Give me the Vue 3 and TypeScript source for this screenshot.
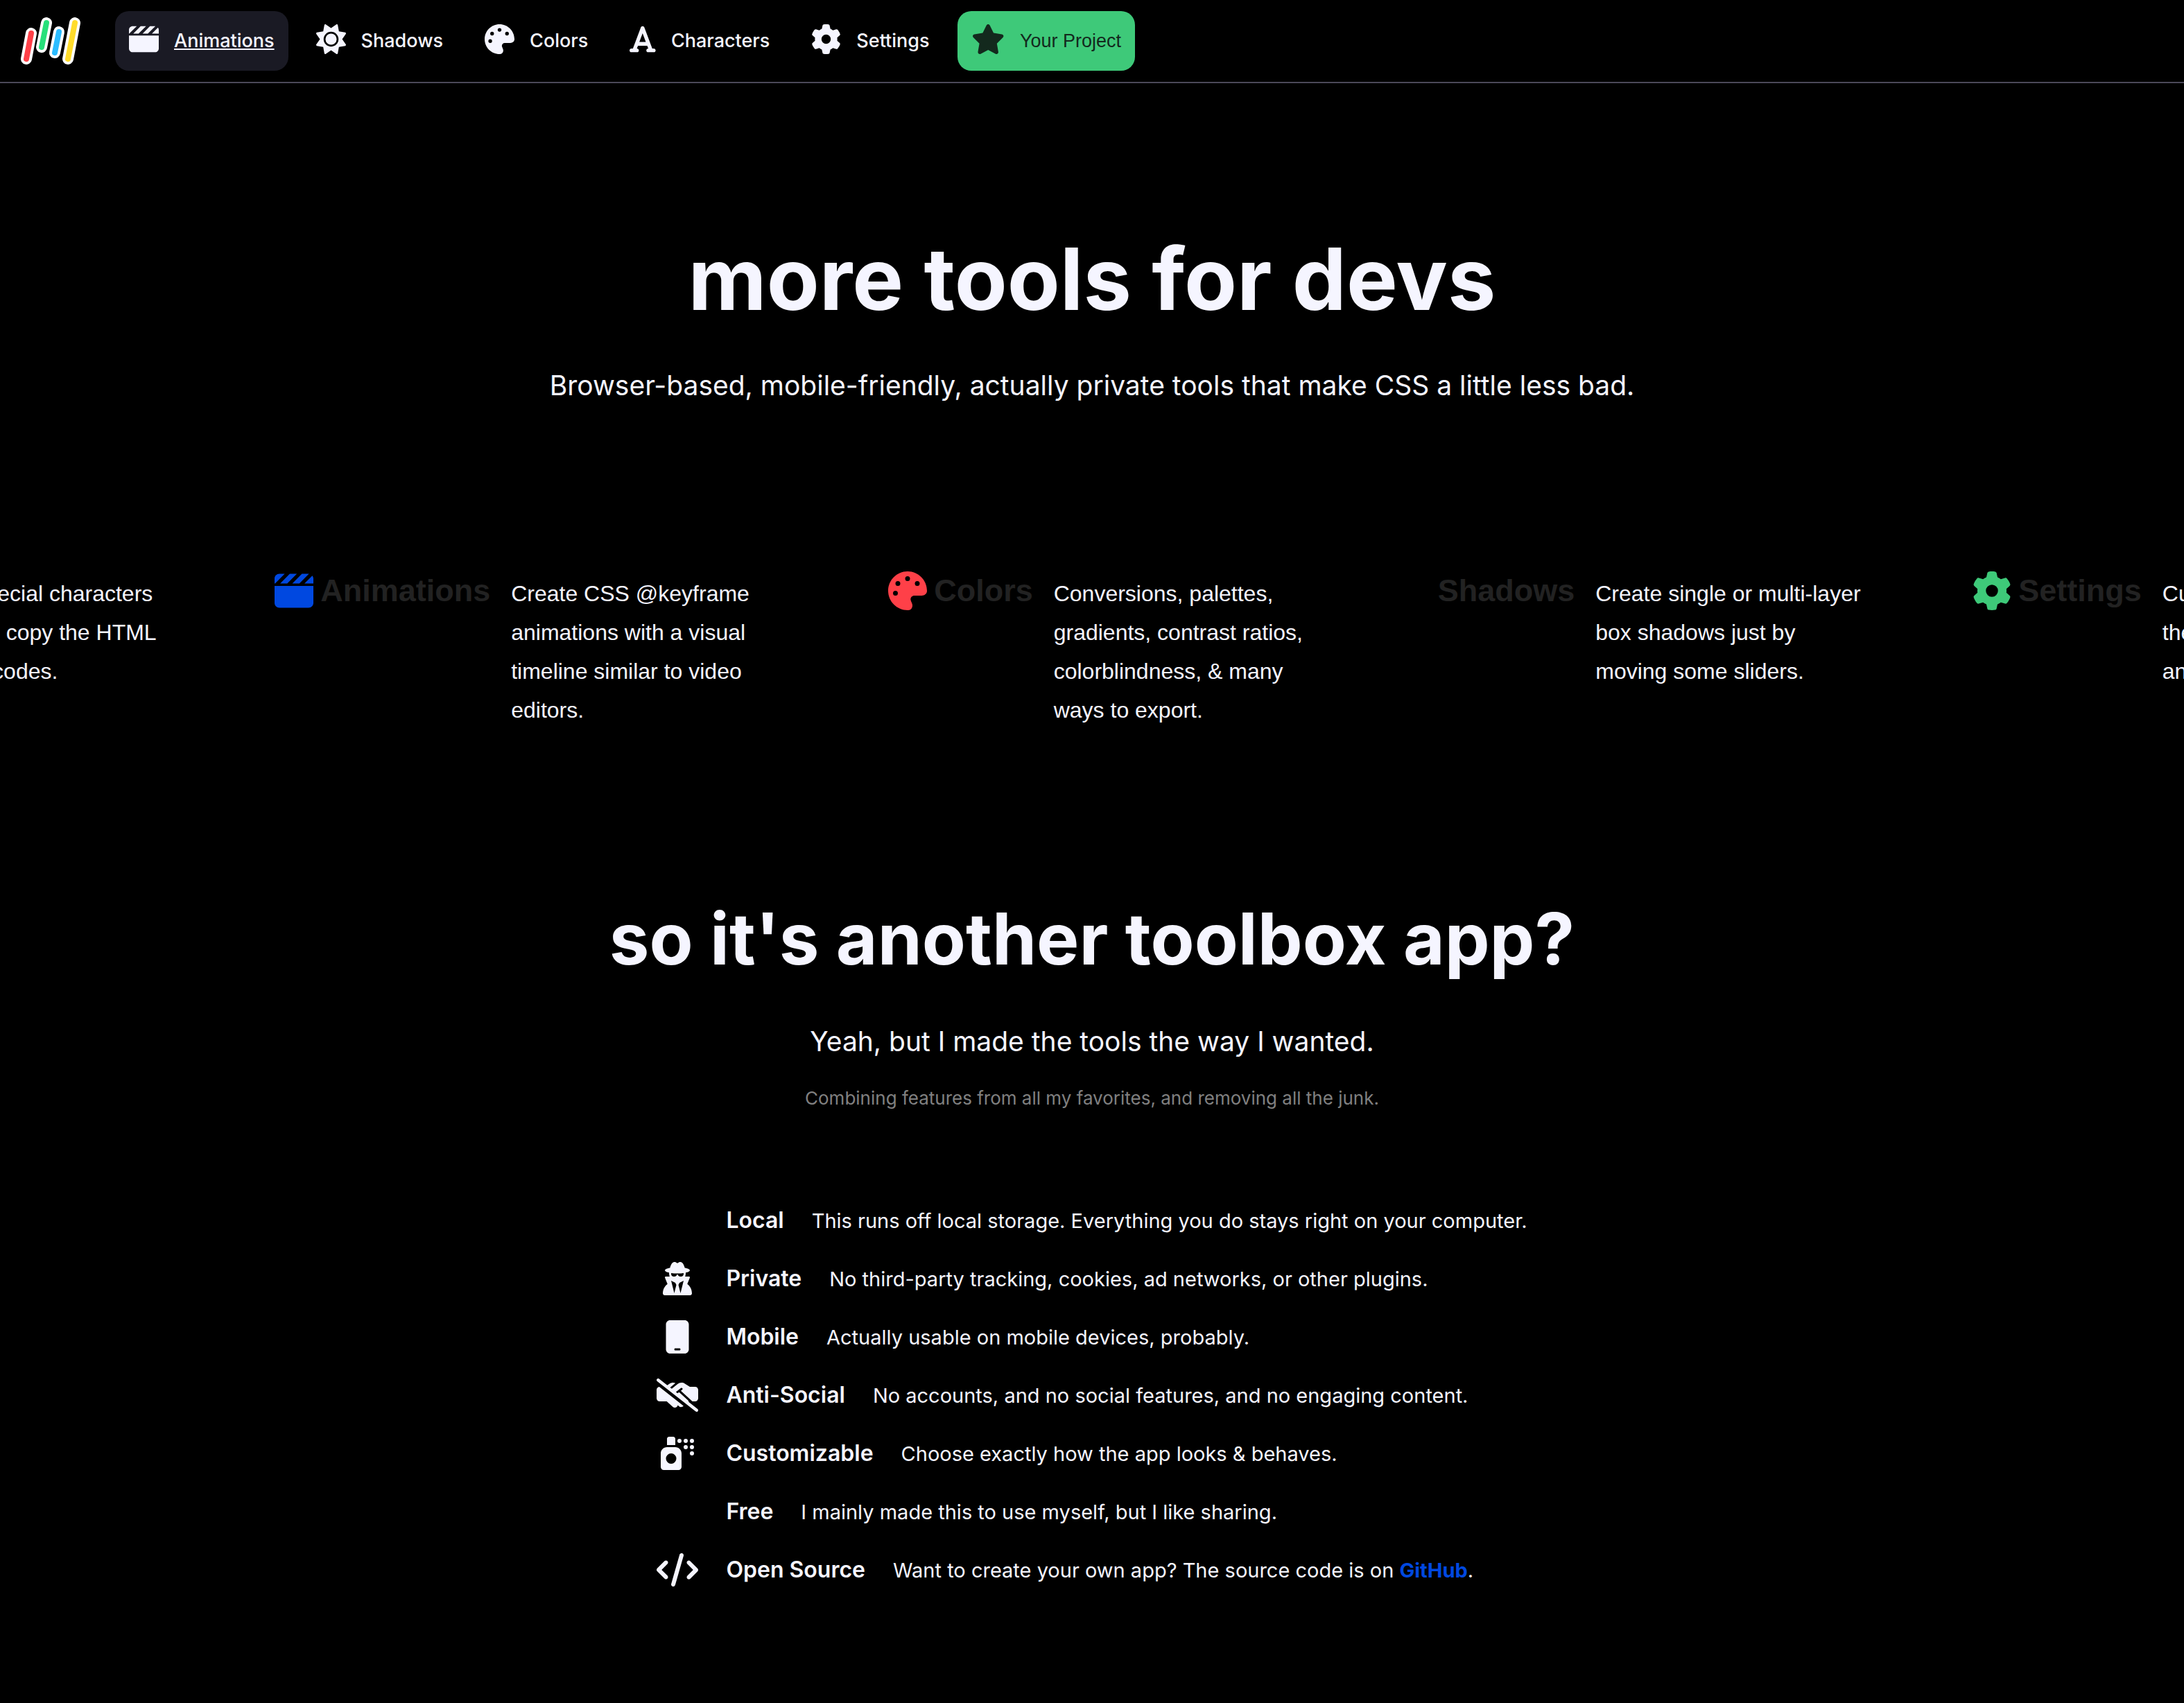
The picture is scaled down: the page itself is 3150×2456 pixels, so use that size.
<script setup lang="ts">
interface Icon {
  width: number
  paths: string[]
}

const icons: Record<string, Icon> = {
  clapperboard: {
    width: 512,
    paths: [
      'M448 32H361.9l-1 1-127 127h92.1l1-1L453.8 32.3c-1.9-.2-3.8-.3-5.8-.3zm64 128V96c0-15.1-5.3-29.1-14-40l-104 104H512zM294.1 32H201.9l-1 1L73.9 160h92.1l1-1 127-127zM64 32C28.7 32 0 60.7 0 96v64H6.1l1-1 127-127H64zM512 192H0V416c0 35.3 28.7 64 64 64H448c35.3 0 64-28.7 64-64V192z',
    ],
  },
  sun: {
    width: 512,
    paths: [
      'M361.5 1.2c5 2.1 8.6 6.6 9.6 11.9L391 121l107.9 19.8c5.3 1 9.8 4.6 11.9 9.6s1.5 10.7-1.6 15.2L446.9 256l62.3 90.3c3.1 4.5 3.7 10.2 1.6 15.2s-6.6 8.6-11.9 9.6L391 391 371.1 498.9c-1 5.3-4.6 9.8-9.6 11.9s-10.7 1.5-15.2-1.6L256 446.9l-90.3 62.3c-4.5 3.1-10.2 3.7-15.2 1.6s-8.6-6.6-9.6-11.9L121 391 13.1 371.1c-5.3-1-9.8-4.6-11.9-9.6s-1.5-10.7 1.6-15.2L65.1 256 2.8 165.7c-3.1-4.5-3.7-10.2-1.6-15.2s6.6-8.6 11.9-9.6L121 121 140.9 13.1c1-5.3 4.6-9.8 9.6-11.9s10.7-1.5 15.2 1.6L256 65.1 346.3 2.8c4.5-3.1 10.2-3.7 15.2-1.6zM160 256a96 96 0 1 1 192 0 96 96 0 1 1 -192 0zm224 0a128 128 0 1 0 -256 0 128 128 0 1 0 256 0z',
    ],
  },
  palette: {
    width: 512,
    paths: [
      'M512 256c0 .9 0 1.8 0 2.7c-.4 36.5-33.6 61.3-70.1 61.3L344 320c-26.5 0-48 21.5-48 48c0 3.4 .4 6.7 1 9.9c2.1 10.2 6.5 20 10.8 29.9c6.1 13.8 12.1 27.5 12.1 42c0 31.8-21.6 60.7-53.4 62c-3.5 .1-7 .2-10.6 .2C114.6 512 0 397.4 0 256S114.6 0 256 0S512 114.6 512 256zM128 288a32 32 0 1 0 -64 0 32 32 0 1 0 64 0zm0-96a32 32 0 1 0 0-64 32 32 0 1 0 0 64zM288 96a32 32 0 1 0 -64 0 32 32 0 1 0 64 0zm96 96a32 32 0 1 0 0-64 32 32 0 1 0 0 64z',
    ],
  },
  font: {
    width: 448,
    paths: [
      'M254 52.8C249.3 40.3 237.3 32 224 32s-25.3 8.3-30 20.8L57.8 416H32c-17.7 0-32 14.3-32 32s14.3 32 32 32h96c17.7 0 32-14.3 32-32s-14.3-32-32-32h-1.8l18-48H303.8l18 48H320c-17.7 0-32 14.3-32 32s14.3 32 32 32h96c17.7 0 32-14.3 32-32s-14.3-32-32-32H390.2L254 52.8zM279.8 304H168.2L224 155.1 279.8 304z',
    ],
  },
  gear: {
    width: 512,
    paths: [
      'M495.9 166.6c3.2 8.7 .5 18.4-6.4 24.6l-43.3 39.4c1.1 8.3 1.7 16.8 1.7 25.4s-.6 17.1-1.7 25.4l43.3 39.4c6.9 6.2 9.6 15.9 6.4 24.6c-4.4 11.9-9.7 23.3-15.8 34.3l-4.7 8.1c-6.6 11-14 21.4-22.1 31.2c-5.9 7.2-15.7 9.6-24.5 6.8l-55.7-17.7c-13.4 10.3-28.2 18.9-44 25.4l-12.5 57.1c-2 9.1-9 16.3-18.2 17.8c-13.8 2.3-28 3.5-42.5 3.5s-28.7-1.2-42.5-3.5c-9.2-1.5-16.2-8.7-18.2-17.8l-12.5-57.1c-15.8-6.5-30.6-15.1-44-25.4L83.1 425.9c-8.8 2.8-18.6 .3-24.5-6.8c-8.1-9.8-15.5-20.2-22.1-31.2l-4.7-8.1c-6.1-11-11.4-22.4-15.8-34.3c-3.2-8.7-.5-18.4 6.4-24.6l43.3-39.4C64.6 273.1 64 264.6 64 256s.6-17.1 1.7-25.4L22.4 191.2c-6.9-6.2-9.6-15.9-6.4-24.6c4.4-11.9 9.7-23.3 15.8-34.3l4.7-8.1c6.6-11 14-21.4 22.1-31.2c5.9-7.2 15.7-9.6 24.5-6.8l55.7 17.7c13.4-10.3 28.2-18.9 44-25.4l12.5-57.1c2-9.1 9-16.3 18.2-17.8C227.3 1.2 241.5 0 256 0s28.7 1.2 42.5 3.5c9.2 1.5 16.2 8.7 18.2 17.8l12.5 57.1c15.8 6.5 30.6 15.1 44 25.4l55.7-17.7c8.8-2.8 18.6-.3 24.5 6.8c8.1 9.8 15.5 20.2 22.1 31.2l4.7 8.1c6.1 11 11.4 22.4 15.8 34.3zM256 336a80 80 0 1 0 0-160 80 80 0 1 0 0 160z',
    ],
  },
  star: {
    width: 576,
    paths: [
      'M316.9 18C311.6 7 300.4 0 288.1 0s-23.4 7-28.8 18L195 150.3 51.4 171.5c-12 1.8-22 10.2-25.7 21.7s-.7 24.2 7.9 32.7L137.8 329 113.2 474.7c-2 12 3 24.2 12.9 31.3s23 8 33.8 2.3l128.3-68.5 128.3 68.5c10.8 5.7 23.9 4.9 33.8-2.3s14.9-19.3 12.9-31.3L438.5 329 542.7 225.9c8.6-8.5 11.7-21.2 7.9-32.7s-13.7-19.9-25.7-21.7L381.2 150.3 316.9 18z',
    ],
  },
  userSecret: {
    width: 448,
    paths: [
      'M224 16c-6.7 0-10.8-2.8-15.5-6.1C201.9 5.4 194 0 176 0c-30.5 0-52 43.7-66 89.4C62.7 98.1 32 112.2 32 128c0 14.3 25 27.1 64.6 35.9c-.4 4-.6 8-.6 12.1c0 17 3.3 33.2 9.3 48H45.4C38 224 32 230 32 237.4c0 1.7 .3 3.4 1 5l38.8 96.9C28.2 371.8 0 423.8 0 482.3C0 498.7 13.3 512 29.7 512H418.3c16.4 0 29.7-13.3 29.7-29.7c0-58.5-28.2-110.4-71.7-143L415 242.4c.6-1.6 1-3.3 1-5c0-7.4-6-13.4-13.4-13.4H342.7c6-14.8 9.3-31 9.3-48c0-4.1-.2-8.1-.6-12.1C391 155.1 416 142.3 416 128c0-15.8-30.7-29.9-78-38.6C324 43.7 302.5 0 272 0c-18 0-25.9 5.4-32.5 9.9c-4.8 3.3-8.8 6.1-15.5 6.1zm56 208H267.6c-16.5 0-31.1-10.6-36.3-26.2c-2.3-7-12.2-7-14.5 0c-5.2 15.6-19.9 26.2-36.3 26.2H168c-22.1 0-40-17.9-40-40V169.6c28.2 4.1 61 6.4 96 6.4s67.8-2.3 96-6.4V184c0 22.1-17.9 40-40 40zm-88 96l16 32L176 480 128 288l64 32zm128-32L272 480 240 352l16-32 64-32z',
    ],
  },
  mobile: {
    width: 384,
    paths: [
      'M16 64C16 28.7 44.7 0 80 0H304c35.3 0 64 28.7 64 64V448c0 35.3-28.7 64-64 64H80c-35.3 0-64-28.7-64-64V64zM144 448c0 8.8 7.2 16 16 16h64c8.8 0 16-7.2 16-16s-7.2-16-16-16H160c-8.8 0-16 7.2-16 16z',
    ],
  },
  handshakeSlash: {
    width: 640,
    paths: [
      'M38.8 5.1C28.4-3.1 13.3-1.2 5.1 9.2S-1.2 34.7 9.2 42.9l592 464c10.4 8.2 25.5 6.3 33.7-4.1s6.3-25.5-4.1-33.7l-135-105.8c-1.1-11.3-6.3-22.3-15.3-30.7l-134.2-123-23.4 18.2-26-20.3 77.2-60.1c7-5.4 17-4.2 22.5 2.8s4.2 17-2.8 22.5l-20.9 16.2L550.2 352H592c26.5 0 48-21.5 48-48V176c0-26.5-21.5-48-48-48H516h-4-.7l-3.9-2.5L434.8 79c-15.3-9.8-33.2-15-51.4-15c-21.8 0-43 7.5-60 21.2l-89.7 72.6-25.8-20.3 81.8-66.2c-11.6-4.9-24.1-7.4-36.8-7.4C234 64 215.7 69.6 200 80l-35.5 23.7L38.8 5.1z',
      'M0 176v128c0 26.5 21.5 48 48 48h108.2l91.4 83.4c19.6 17.9 49.9 16.5 67.8-3.1c5.5-6.1 9.2-13.2 11.1-20.6l17 15.6c19.5 17.9 49.9 16.6 67.8-2.9c.8-.8 1.5-1.7 2.2-2.6L41.2 128.5C17.9 131.8 0 151.8 0 176z',
    ],
  },
  sprayCan: {
    width: 512,
    paths: [
      'M96 32v96H224V32c0-17.7-14.3-32-32-32H128C110.3 0 96 14.3 96 32zm0 128c-53 0-96 43-96 96V464c0 26.5 21.5 48 48 48H272c26.5 0 48-21.5 48-48V256c0-53-43-96-96-96H96zm64 96a80 80 0 1 1 0 160 80 80 0 1 1 0-160z',
      'M320 64a32 32 0 1 0-64 0 32 32 0 1 0 64 0zm96 0a32 32 0 1 0-64 0 32 32 0 1 0 64 0zm96 0a32 32 0 1 0-64 0 32 32 0 1 0 64 0zm-96 96a32 32 0 1 0-64 0 32 32 0 1 0 64 0zm96 0a32 32 0 1 0-64 0 32 32 0 1 0 64 0zm0 96a32 32 0 1 0-64 0 32 32 0 1 0 64 0z',
    ],
  },
  code: {
    width: 640,
    paths: [
      'M392.8 1.2c-17-4.9-34.7 5-39.6 22l-128 448c-4.9 17 5 34.7 22 39.6s34.7-5 39.6-22l128-448c4.9-17-5-34.7-22-39.6zm80.6 120.1c-12.5 12.5-12.5 32.8 0 45.3L562.7 256l-89.4 89.4c-12.5 12.5-12.5 32.8 0 45.3s32.8 12.5 45.3 0l112-112c12.5-12.5 12.5-32.8 0-45.3l-112-112c-12.5-12.5-32.8-12.5-45.3 0zm-306.7 0c-12.5-12.5-32.8-12.5-45.3 0l-112 112c-12.5 12.5-12.5 32.8 0 45.3l112 112c12.5 12.5 32.8 12.5 45.3 0s12.5-32.8 0-45.3L77.3 256l89.4-89.4c12.5-12.5 12.5-32.8 0-45.3z',
    ],
  },
}

const navItems = [
  { label: 'Animations', icon: 'clapperboard', active: true },
  { label: 'Shadows', icon: 'sun', active: false },
  { label: 'Colors', icon: 'palette', active: false },
  { label: 'Characters', icon: 'font', active: false },
  { label: 'Settings', icon: 'gear', active: false },
]

const tools = [
  { name: 'Characters', icon: 'font', tone: 'yellow', text: 'Search special characters and emoji, copy the HTML and CSS codes.' },
  { name: 'Animations', icon: 'clapperboard', tone: 'blue', text: 'Create CSS @keyframe animations with a visual timeline similar to video editors.' },
  { name: 'Colors', icon: 'palette', tone: 'red', text: 'Conversions, palettes, gradients, contrast ratios, colorblindness, & many ways to export.' },
  { name: 'Shadows', icon: '', tone: '', text: 'Create single or multi-layer box shadows just by moving some sliders.' },
  { name: 'Settings', icon: 'gear', tone: 'green', text: 'Customize everything in the app: look, behavior, and controls.' },
]

const features = [
  { name: 'Local', icon: '', text: 'This runs off local storage. Everything you do stays right on your computer.' },
  { name: 'Private', icon: 'userSecret', text: 'No third-party tracking, cookies, ad networks, or other plugins.' },
  { name: 'Mobile', icon: 'mobile', text: 'Actually usable on mobile devices, probably.' },
  { name: 'Anti-Social', icon: 'handshakeSlash', text: 'No accounts, and no social features, and no engaging content.' },
  { name: 'Customizable', icon: 'sprayCan', text: 'Choose exactly how the app looks & behaves.' },
  { name: 'Free', icon: '', text: 'I mainly made this to use myself, but I like sharing.' },
  { name: 'Open Source', icon: 'code', text: 'Want to create your own app? The source code is on ', link: 'GitHub' },
]
</script>

<template>
  <div class="page">
    <header class="topbar">
      <a class="logo" href="#" aria-label="Home">
        <svg viewBox="0 0 86 68" aria-hidden="true">
          <g stroke="#fff" stroke-width="16" stroke-linecap="round">
            <path d="M15 23L8 60" />
            <path d="M37 8L30 43" />
            <path d="M55 21L49 51" />
            <path d="M78 8L68 60" />
          </g>
          <g stroke-width="8" stroke-linecap="round">
            <path stroke="#ff4048" d="M15 23L8 60" />
            <path stroke="#26e07a" d="M37 8L30 43" />
            <path stroke="#2bbcff" d="M55 21L49 51" />
            <path stroke="#ffdc2b" d="M78 8L68 60" />
          </g>
        </svg>
      </a>
      <nav class="nav">
        <a v-for="item in navItems" :key="item.label" href="#" class="pill" :class="{ active: item.active }">
          <svg :viewBox="`0 0 ${icons[item.icon].width} 512`" aria-hidden="true">
            <path v-for="d in icons[item.icon].paths" :key="d" :d="d" />
          </svg>
          <span>{{ item.label }}</span>
        </a>
        <button type="button" class="pill project">
          <svg :viewBox="`0 0 ${icons.star.width} 512`" aria-hidden="true">
            <path v-for="d in icons.star.paths" :key="d" :d="d" />
          </svg>
          <span>Your Project</span>
        </button>
      </nav>
    </header>

    <main>
      <section class="hero">
        <h1>more tools for devs</h1>
        <p class="lead">Browser-based, mobile-friendly, actually private tools that make CSS a little less bad.</p>
      </section>

      <section class="marquee" aria-label="Tools">
        <div class="track">
          <article v-for="tool in tools" :key="tool.name" class="tool">
            <h3>
              <span class="badge" :class="tool.tone">
                <svg v-if="tool.icon" :viewBox="`0 0 ${icons[tool.icon].width} 512`" aria-hidden="true">
                  <path v-for="d in icons[tool.icon].paths" :key="d" :d="d" />
                </svg>
              </span>
              <span>{{ tool.name }}</span>
            </h3>
            <p>{{ tool.text }}</p>
          </article>
        </div>
      </section>

      <section class="about">
        <h2>so it's another toolbox app?</h2>
        <p class="lead">Yeah, but I made the tools the way I wanted.</p>
        <p class="note">Combining features from all my favorites, and removing all the junk.</p>
        <ul class="features">
          <li v-for="feature in features" :key="feature.name">
            <span class="mark">
              <svg v-if="feature.icon" :viewBox="`0 0 ${icons[feature.icon].width} 512`" aria-hidden="true">
                <path v-for="d in icons[feature.icon].paths" :key="d" :d="d" />
              </svg>
            </span>
            <div class="copy">
              <strong>{{ feature.name }}</strong>
              <span class="detail">{{ feature.text }}<a v-if="feature.link" href="#">{{ feature.link }}</a><template v-if="feature.link">.</template></span>
            </div>
          </li>
        </ul>
      </section>
    </main>
  </div>
</template>

<style>
body {
  margin: 0;
  background: #000;
}
</style>

<style scoped>
.page {
  min-height: 100vh;
  background: #000;
  color: #f5f5ff;
  font-family: Inter, 'Liberation Sans', sans-serif;
}

svg {
  display: block;
  flex: none;
  fill: currentColor;
}

.topbar {
  display: flex;
  align-items: center;
  gap: 50px;
  padding: 16px 30px;
  border-bottom: 2px solid #4b4859;
}

.logo svg {
  height: 68px;
}

.nav {
  display: flex;
  gap: 20px;
}

.pill {
  display: flex;
  align-items: center;
  gap: 22px;
  box-sizing: border-box;
  height: 86px;
  padding: 0 20px;
  border: 0;
  border-radius: 20px;
  background: none;
  color: inherit;
  font-size: 27px;
  font-weight: 500;
  line-height: 32px;
  text-decoration: none;
}

.pill svg {
  height: 43px;
  margin-bottom: 6px;
}

.active {
  background: #1a1a24;
}

.active span {
  text-decoration: underline;
}

.project {
  background: #3ec979;
  color: #13291d;
  font-family: 'Liberation Sans', Arial, sans-serif;
  font-weight: 400;
}

h1,
h2,
h3,
p,
ul {
  margin: 0;
  padding: 0;
}

.hero,
.about {
  display: flex;
  flex-direction: column;
  align-items: center;
  text-align: center;
}

.hero {
  padding-top: 202px;
}

h1 {
  font-size: 124px;
  line-height: 160px;
}

h2 {
  font-size: 103px;
  line-height: 128px;
}

.lead {
  margin-top: 50px;
  font-size: 39px;
  line-height: 48px;
}

.about .lead {
  margin-top: 60px;
}

.note {
  margin-top: 42px;
  color: #808080;
  font-size: 26px;
  line-height: 32px;
}

.marquee {
  margin-top: 244px;
  overflow: hidden;
  font-family: 'Liberation Sans', Arial, sans-serif;
}

.track {
  display: flex;
  gap: 160px;
  width: max-content;
  transform: translateX(-472px);
}

.tool {
  display: flex;
  gap: 30px;
}

h3 {
  display: flex;
  align-items: center;
  gap: 10px;
  height: 56px;
  color: #222;
  font-size: 45px;
  line-height: 56px;
}

.badge svg {
  height: 56px;
}

.tool p {
  width: 384px;
  padding-top: 4px;
  font-size: 32px;
  line-height: 56px;
}

.yellow {
  color: #ffdc2b;
}

.blue {
  color: #0048e0;
}

.red {
  color: #ff4048;
}

.green {
  color: #3ec979;
}

.about {
  margin-top: 238px;
  padding-bottom: 120px;
}

.features {
  margin-top: 118px;
  list-style: none;
  text-align: left;
}

.features li {
  display: flex;
  align-items: center;
  gap: 40px;
  height: 84px;
}

.mark {
  display: flex;
  justify-content: center;
  width: 60px;
}

.mark svg {
  height: 48px;
}

.copy {
  display: flex;
  align-items: baseline;
  gap: 40px;
}

.features strong {
  font-size: 32px;
  font-weight: 600;
  line-height: 40px;
}

.detail {
  font-size: 29px;
  line-height: 40px;
}

.detail a {
  color: #0048e0;
  font-weight: 700;
  text-decoration: none;
}
</style>
